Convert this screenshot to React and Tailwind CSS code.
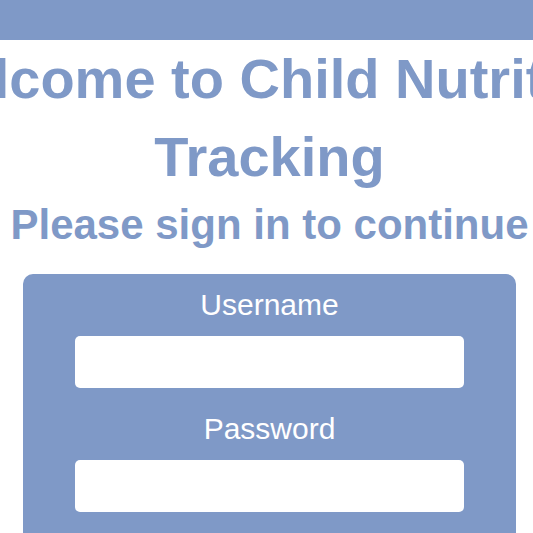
export default function App() {
  return (
    <div className="h-screen overflow-hidden bg-white font-['Liberation_Sans',Arial,sans-serif] text-[#7f99c7]">
      <header className="h-10 bg-[#7f99c7]" />
      <main className="flex flex-col items-center pl-[6px]">
        <h1 className="text-center text-[56px] leading-[78px] font-bold whitespace-nowrap">
          Welcome to Child Nutrition
          <br />
          Tracking
        </h1>
        <h2 className="text-center text-[42px] leading-[58px] font-bold whitespace-nowrap">
          Please sign in to continue
        </h2>
        <form className="mt-5 flex w-full flex-col px-[17px]">
          <div className="flex flex-col gap-[18px] rounded-t-[10px] bg-[#7f99c7] px-[52px] pt-2 pb-12 text-white">
            <div className="flex flex-col gap-2">
              <label htmlFor="username" className="text-center text-[30px] leading-[46px]">Username</label>
              <input id="username" type="text" className="h-[52px] w-full rounded-[5px] bg-white px-4 text-2xl text-gray-800" />
            </div>
            <div className="flex flex-col gap-2">
              <label htmlFor="password" className="text-center text-[30px] leading-[46px]">Password</label>
              <input id="password" type="password" className="h-[52px] w-full rounded-[5px] bg-white px-4 text-2xl text-gray-800" />
            </div>
          </div>
        </form>
      </main>
    </div>
  );
}
